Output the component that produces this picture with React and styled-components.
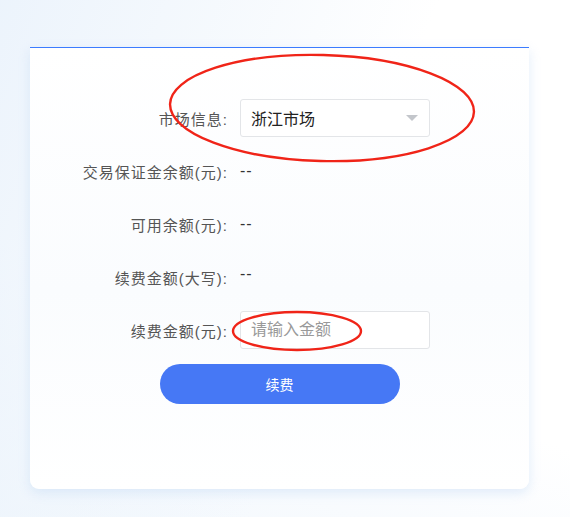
import React from "react";
import styled, { createGlobalStyle } from "styled-components";

const GlobalStyle = createGlobalStyle`
  html, body {
    margin: 0;
    padding: 0;
  }
  body {
    font-family: "Liberation Sans", "Noto Sans CJK SC", sans-serif;
    background: #fff;
  }
`;

const Page = styled.div`
  position: relative;
  width: 570px;
  height: 517px;
  overflow: hidden;
  padding-top: 47px;
  box-sizing: border-box;
  background:
    linear-gradient(110deg, rgba(230, 240, 251, 0.75) 0%, rgba(238, 245, 252, 0.6) 28%, rgba(255, 255, 255, 0) 58%),
    linear-gradient(200deg, rgba(255, 255, 255, 0) 62%, rgba(236, 244, 252, 0.7) 100%),
    #fff;
`;

const Card = styled.div`
  margin-left: 30px;
  width: 499px;
  height: 442px;
  box-sizing: border-box;
  border-radius: 0 0 9px 9px;
  background: linear-gradient(180deg, #ffffff 0%, #fafcfe 55%, #ffffff 100%);
  box-shadow: 0 4px 12px rgba(190, 215, 245, 0.45);
  display: flex;
  flex-direction: column;
`;

const TopLine = styled.div`
  height: 1px;
  background: #3c7cff;
  margin-bottom: 51px;
`;

const Form = styled.div`
  display: grid;
  grid-template-columns: 198px 190px;
  column-gap: 12px;
  row-gap: 15px;
  grid-auto-rows: 38px;
  align-items: center;
`;

const Label = styled.div`
  text-align: right;
  font-size: 15px;
  letter-spacing: 1px;
  color: #555;
  white-space: nowrap;
`;

const Value = styled.div`
  font-size: 16px;
  color: #333;
  letter-spacing: 1px;
  margin-top: ${(p) => (p.$raise ? "-6px" : "0")};
`;

const Select = styled.div`
  height: 38px;
  box-sizing: border-box;
  border: 1px solid #e3e5e8;
  border-radius: 3px;
  display: flex;
  align-items: center;
  justify-content: space-between;
  padding: 0 11px 0 10px;
  font-size: 16px;
  color: #222;
  background: #fff;
`;

const Arrow = styled.span`
  width: 0;
  height: 0;
  border-left: 6px solid transparent;
  border-right: 6px solid transparent;
  border-top: 6px solid #c3c6cb;
`;

const Input = styled.input`
  height: 38px;
  width: 190px;
  box-sizing: border-box;
  border: 1px solid #e3e5e8;
  border-radius: 3px;
  padding: 0 10px;
  font-family: inherit;
  font-size: 16px;
  color: #333;
  background: #fff;
  outline: none;
  &::placeholder {
    color: #999;
  }
`;

const Button = styled.button`
  align-self: center;
  margin-top: 15px;
  width: 240px;
  height: 40px;
  border: none;
  border-radius: 20px;
  background: #4678f5;
  color: #fff;
  font-family: inherit;
  font-size: 14px;
  cursor: pointer;
`;

const Marks = styled.svg`
  position: absolute;
  left: 0;
  top: 0;
  pointer-events: none;
`;

export default function App() {
  return (
    <>
      <GlobalStyle />
      <Page>
        <Card>
          <TopLine />
          <Form>
            <Label>市场信息:</Label>
            <Select>
              <span>浙江市场</span>
              <Arrow />
            </Select>
            <Label>交易保证金余额(元):</Label>
            <Value>--</Value>
            <Label>可用余额(元):</Label>
            <Value>--</Value>
            <Label>续费金额(大写):</Label>
            <Value $raise>--</Value>
            <Label>续费金额(元):</Label>
            <Input placeholder="请输入金额" />
          </Form>
          <Button>续费</Button>
        </Card>
        <Marks width="570" height="517">
          <ellipse
            cx="322"
            cy="108"
            rx="152"
            ry="53"
            fill="none"
            stroke="#f02418"
            strokeWidth="2.4"
            transform="rotate(1.5 322 108)"
          />
          <ellipse
            cx="297"
            cy="331"
            rx="64"
            ry="19"
            fill="none"
            stroke="#f02418"
            strokeWidth="2.4"
          />
        </Marks>
      </Page>
    </>
  );
}
